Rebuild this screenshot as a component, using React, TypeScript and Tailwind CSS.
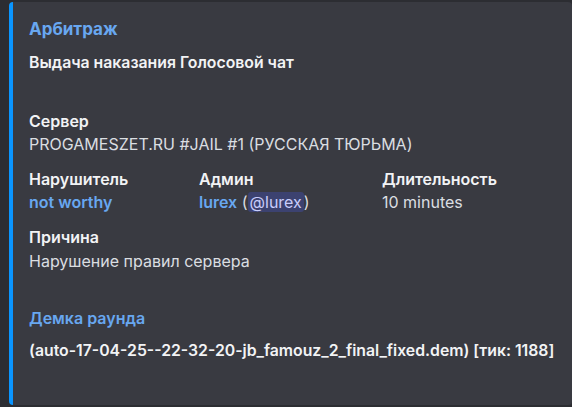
const font = { fontFamily: 'Inter, "Noto Sans", sans-serif' };

function FieldName({ children }: { children: React.ReactNode }) {
  return <div className="text-[16px] leading-[22px] font-semibold text-[#f2f3f5]">{children}</div>;
}

function FieldValue({ children, className = "" }: { children: React.ReactNode; className?: string }) {
  return <div className={"text-[16px] leading-[22px] text-[#dbdee1] " + className}>{children}</div>;
}

export default function App() {
  return (
    <div className="w-[572px] h-[407px] overflow-hidden bg-[#2c2d32] pt-[2px] pl-[9px]" style={font}>
      <div className="h-[403px] rounded-[4px] border-l-4 border-[#0a95ff] bg-[#393a41] pl-[16px] pt-4">
        <div className="text-[17px] leading-[22px] font-bold text-[#68a7f0]">Арбитраж</div>
        <div className="mt-[12px] text-[15.8px] leading-[22px] font-semibold text-[#f2f3f5]">
          Выдача наказания Голосовой чат
        </div>

        <div className="mt-[36px]">
          <FieldName>Сервер</FieldName>
          <FieldValue className="mt-px">PROGAMESZET.RU #JAIL #1 (РУССКАЯ ТЮРЬМА)</FieldValue>
        </div>

        <div className="mt-[13px] flex">
          <div className="w-[170px]">
            <FieldName>Нарушитель</FieldName>
            <FieldValue className="mt-px">
              <span className="font-semibold text-[#68a7f0]">not worthy</span>
            </FieldValue>
          </div>
          <div className="w-[183px]">
            <FieldName>Админ</FieldName>
            <FieldValue className="mt-px">
              <span className="font-semibold text-[#68a7f0]">lurex</span> (
              <span className="rounded-[3px] bg-[#3c4270] px-[2px] text-[#c9cdfb]">@lurex</span>)
            </FieldValue>
          </div>
          <div>
            <FieldName>Длительность</FieldName>
            <FieldValue className="mt-px">10 minutes</FieldValue>
          </div>
        </div>

        <div className="mt-[13px]">
          <FieldName>Причина</FieldName>
          <FieldValue className="mt-[2px]">Нарушение правил сервера</FieldValue>
        </div>

        <div className="mt-[35px] text-[16px] leading-[22px] font-semibold text-[#68a7f0]">Демка раунда</div>
        <div className="mt-[11px] text-[15.8px] leading-[22px] font-semibold text-[#f2f3f5]">
          (auto-17-04-25--22-32-20-jb_famouz_2_final_fixed.dem) [тик: 1188]
        </div>
      </div>
    </div>
  );
}
